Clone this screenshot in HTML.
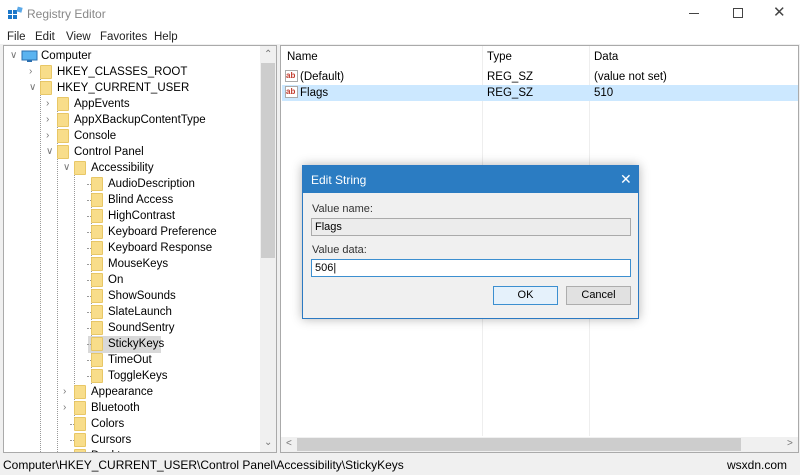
<!DOCTYPE html>
<html><head><style>
*{margin:0;padding:0;box-sizing:border-box}
body{width:800px;height:475px;overflow:hidden;background:#f0f0f0;font-family:"Liberation Sans",sans-serif;font-size:11.5px;color:#000;position:relative}
.a{position:absolute}
.r{position:absolute;height:16px;line-height:16px;white-space:nowrap}
.f{position:absolute;width:12px;height:14px;background:#f8dd8a;border:1px solid #e8c766;border-radius:1px}
.ch{position:absolute;color:#777;font-size:10px;line-height:16px}
.dv{position:absolute;border-left:1px dotted #999;width:0}
.dh{position:absolute;border-top:1px dotted #999;height:0}
</style></head><body>
<div class="a" style="left:0;top:0;width:800px;height:28px;background:#fff"></div>
<svg class="a" style="left:7px;top:6px" width="16" height="16"><rect x="1" y="4" width="4" height="4" fill="#1b77c9"/><rect x="6" y="4" width="4" height="4" fill="#1b77c9"/><rect x="1" y="9" width="4" height="4" fill="#1b77c9"/><rect x="6" y="9" width="4" height="4" fill="#1b77c9"/><rect x="10" y="1" width="5" height="5" fill="#5aa8e8" transform="rotate(15 12 4)"/></svg>
<div class="r" style="left:27px;top:6px;color:#888;font-size:12px">Registry Editor</div>
<div class="a" style="left:689px;top:13px;width:10px;height:1px;background:#444"></div>
<div class="a" style="left:733px;top:8px;width:10px;height:10px;border:1px solid #444"></div>
<div class="r" style="left:773px;top:5px;font-size:15px;color:#444">✕</div>
<div class="a" style="left:0;top:28px;width:800px;height:16px;background:#fff"></div>
<div class="r" style="left:7px;top:29px;color:#222">File</div>
<div class="r" style="left:35px;top:29px;color:#222">Edit</div>
<div class="r" style="left:66px;top:29px;color:#222">View</div>
<div class="r" style="left:100px;top:29px;color:#222">Favorites</div>
<div class="r" style="left:154px;top:29px;color:#222">Help</div>
<div class="a" style="left:3px;top:45px;width:274px;height:408px;background:#fff;border:1px solid #aaa;overflow:hidden">
 <div class="a" style="left:256px;top:0;width:16px;height:406px;background:#f0f0f0"></div>
 <div class="a" style="left:257px;top:17px;width:14px;height:195px;background:#cdcdcd"></div>
 <div class="ch" style="left:260px;top:1px">⌃</div>
 <div class="ch" style="left:260px;top:389px">⌄</div>
</div>
<div class="a" style="left:4px;top:46px;width:256px;height:406px;overflow:hidden">
<div style="position:absolute;left:0;top:2px;width:256px;height:420px">
<div class="dv" style="left:36px;top:24px;height:16px"></div>
<div class="dv" style="left:36px;top:40px;height:370px"></div>
<div class="dv" style="left:53px;top:56px;height:370px"></div>
<div class="dv" style="left:70px;top:120px;height:260px"></div>
<div class="dv" style="left:87px;top:136px;height:200px"></div>
<div class="a" style="left:84px;top:288px;width:73px;height:17px;background:#d9d9d9"></div>
<svg class="a" style="left:17px;top:2px" width="18" height="13"><rect x="1" y="1" width="15" height="9" fill="#5ab3f0" stroke="#2a6fb0"/><rect x="6" y="10" width="5" height="2" fill="#2a6fb0"/></svg>
<div class="ch" style="left:6px;top:0">∨</div>
<div class="r" style="left:37px;top:0">Computer</div>
<div id="t"></div>
</div>
</div>
<div class="a" style="left:280px;top:45px;width:519px;height:408px;background:#fff;border:1px solid #aaa"></div>
<div class="a" style="left:482px;top:46px;width:1px;height:390px;background:#eee"></div>
<div class="a" style="left:589px;top:46px;width:1px;height:390px;background:#eee"></div>
<div class="r" style="left:287px;top:49px">Name</div>
<div class="r" style="left:487px;top:49px">Type</div>
<div class="r" style="left:594px;top:49px">Data</div>
<div class="a" style="left:282px;top:85px;width:516px;height:16px;background:#cce8ff"></div>
<div class="a" style="left:285px;top:70px;width:13px;height:12px;border:1px solid #aaa;background:#fff;color:#c0392b;font-size:8px;line-height:9px;font-weight:bold">ab</div>
<div class="a" style="left:285px;top:86px;width:13px;height:12px;border:1px solid #aaa;background:#fff;color:#c0392b;font-size:8px;line-height:9px;font-weight:bold">ab</div>
<div class="r" style="left:300px;top:69px">(Default)</div>
<div class="r" style="left:487px;top:69px">REG_SZ</div>
<div class="r" style="left:594px;top:69px">(value not set)</div>
<div class="r" style="left:300px;top:85px">Flags</div>
<div class="r" style="left:487px;top:85px">REG_SZ</div>
<div class="r" style="left:594px;top:85px">510</div>
<div class="a" style="left:281px;top:437px;width:517px;height:15px;background:#f0f0f0"></div>
<div class="a" style="left:297px;top:438px;width:444px;height:13px;background:#cdcdcd"></div>
<div class="ch" style="left:286px;top:436px">&lt;</div>
<div class="ch" style="left:787px;top:436px">&gt;</div>
<div class="r" style="left:3px;top:457px;font-size:12px">Computer\HKEY_CURRENT_USER\Control Panel\Accessibility\StickyKeys</div>
<div class="r" style="left:727px;top:457px;font-size:12px">wsxdn.com</div>
<div class="a" style="left:302px;top:165px;width:337px;height:154px;background:#f0f0f0;border:1px solid #2b79c2;box-shadow:0 0 10px rgba(0,0,0,.3)">
 <div class="a" style="left:0;top:0;width:335px;height:27px;background:#2b7cc2"></div>
 <div class="r" style="left:8px;top:6px;color:#fff;font-size:12px">Edit String</div>
 <div class="r" style="left:317px;top:5px;color:#fff;font-size:14px">✕</div>
 <div class="r" style="left:9px;top:35px;color:#333;font-size:11px">Value name:</div>
 <div class="a" style="left:8px;top:52px;width:320px;height:18px;background:#ececec;border:1px solid #aaa;font-size:11px;line-height:16px;padding-left:3px">Flags</div>
 <div class="r" style="left:9px;top:76px;color:#333;font-size:11px">Value data:</div>
 <div class="a" style="left:8px;top:93px;width:320px;height:18px;background:#fff;border:1px solid #3c8fd0;font-size:11px;line-height:16px;padding-left:3px">506|</div>
 <div class="a" style="left:190px;top:120px;width:65px;height:19px;background:#e5f1fb;border:1px solid #3c8fd0;text-align:center;line-height:17px;font-size:11px">OK</div>
 <div class="a" style="left:263px;top:120px;width:65px;height:19px;background:#e1e1e1;border:1px solid #adadad;text-align:center;line-height:17px;font-size:11px">Cancel</div>
</div>
<script>
var rows=[[1,'HKEY_CLASSES_ROOT','>'],[1,'HKEY_CURRENT_USER','v'],[2,'AppEvents','>'],[2,'AppXBackupContentType','>'],[2,'Console','>'],[2,'Control Panel','v'],[3,'Accessibility','v']];
['AudioDescription','Blind Access','HighContrast','Keyboard Preference','Keyboard Response','MouseKeys','On','ShowSounds','SlateLaunch','SoundSentry','StickyKeys','TimeOut','ToggleKeys'].forEach(function(n){rows.push([4,n,''])});
rows.push([3,'Appearance','>'],[3,'Bluetooth','>'],[3,'Colors',''],[3,'Cursors',''],[3,'Desktop','']);
var h='';
rows.forEach(function(r,i){var t=16*(i+1),l=r[0],fx=36+17*(l-1),tx=fx+17;
 if(r[2])h+='<div class="ch" style="left:'+(fx-11)+'px;top:'+t+'px">'+(r[2]=='v'?'∨':'›')+'</div>';
 else h+='<div class="dh" style="left:'+(fx-4)+'px;top:'+(t+8)+'px;width:6px"></div>';
 h+='<div class="f" style="left:'+fx+'px;top:'+(t+1)+'px"></div><div class="r" style="left:'+tx+'px;top:'+t+'px">'+r[1]+'</div>';});
document.getElementById('t').innerHTML=h;
</script>
</body></html>
